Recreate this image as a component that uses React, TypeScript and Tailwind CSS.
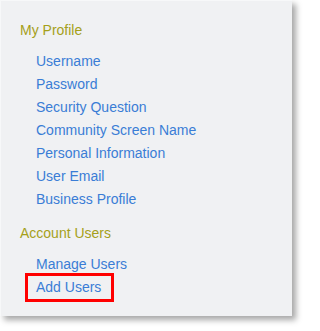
const profileLinks = [
  "Username",
  "Password",
  "Security Question",
  "Community Screen Name",
  "Personal Information",
  "User Email",
  "Business Profile",
];

export default function App() {
  return (
    <div className="h-[331px] w-[307px] bg-white font-['Liberation_Sans',Arial,sans-serif]">
      <div className="h-[316px] w-[292px] border-l border-t border-[#f7f8f9] bg-[#f0f1f3] pl-[19px] pt-[19px] shadow-[4px_4px_6px_rgba(0,0,0,0.35)]">
        <h2 className="text-[14px] leading-[20px] text-[#a5a01a]">My Profile</h2>
        <ul className="mt-[10px] pl-[16px]">
          {profileLinks.map((label) => (
            <li key={label} className="text-[14px] leading-[23px] text-[#3a7dd6]">
              <a href="#">{label}</a>
            </li>
          ))}
        </ul>
        <h2 className="mt-[12px] text-[14px] leading-[20px] text-[#a5a01a]">Account Users</h2>
        <ul className="mt-[10px] pl-[16px]">
          <li className="text-[14px] leading-[23px] text-[#3a7dd6]">
            <a href="#">Manage Users</a>
          </li>
          <li className="text-[14px] leading-[23px] text-[#3a7dd6]">
            <a
              href="#"
              className="-mx-[11px] -my-[3px] block w-[89px] border-[3px] border-[#ff0000] pl-[8px]"
            >
              Add Users
            </a>
          </li>
        </ul>
      </div>
    </div>
  );
}
